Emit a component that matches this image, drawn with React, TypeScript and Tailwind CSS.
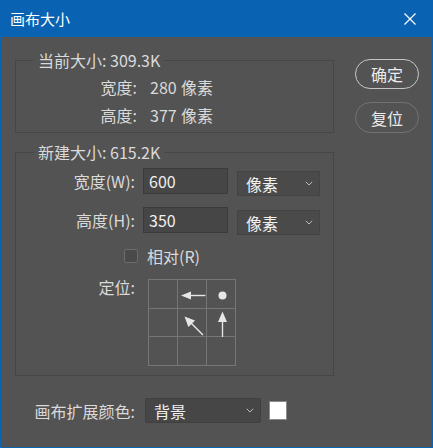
import React from "react";

const font = "font-['Noto_Sans_CJK_SC','Noto_Sans',sans-serif]";

function Chevron() {
  return (
    <svg width="8" height="5" viewBox="0 0 8 5" className="shrink-0">
      <polyline points="0.8,0.8 4,4 7.2,0.8" fill="none" stroke="#bdbdbd" strokeWidth="1" />
    </svg>
  );
}

function Cell({ children }: { children?: React.ReactNode }) {
  return <div className="border-r border-b border-[#767676] relative">{children}</div>;
}

export default function App() {
  return (
    <div className={`w-[433px] h-[448px] flex flex-col ${font} text-[16px] leading-[20px] text-[#dadada]`}>
      <div className="h-[37px] shrink-0 bg-[#0a63b2] flex items-center justify-between pl-[10px] pr-[17px] text-white">
        <span className="text-[15px]">画布大小</span>
        <svg width="12" height="12" viewBox="0 0 12 12">
          <path d="M0.5 0.5 L11.5 11.5 M11.5 0.5 L0.5 11.5" stroke="#ffffff" strokeWidth="1.2" />
        </svg>
      </div>
      <div className="flex-1 bg-[#535353] border-x border-b border-[#0a63b2] flex flex-col">
        <div className="flex pt-[13px] pl-[14px]">
          <div className="flex flex-col w-[319px]">
            <fieldset className="border border-[#464646] w-[319px]">
              <legend className="ml-[18px] px-[4px] leading-[20px]">当前大小: 309.3K</legend>
              <div className="pt-[3px] pb-[3px]">
                <div className="h-[28px] flex items-center">
                  <span className="w-[121px] text-right">宽度:</span>
                  <span className="ml-[13px] w-[31px]">280</span>
                  <span>像素</span>
                </div>
                <div className="h-[28px] flex items-center">
                  <span className="w-[121px] text-right">高度:</span>
                  <span className="ml-[13px] w-[31px]">377</span>
                  <span>像素</span>
                </div>
              </div>
            </fieldset>
            <fieldset className="border border-[#464646] w-[319px] mt-[9px]">
              <legend className="ml-[18px] px-[4px] leading-[20px]">新建大小: 615.2K</legend>
              <div className="pt-[6px] pb-[9px] flex flex-col">
                <div className="h-[28px] flex items-start">
                  <span className="w-[119px] text-right mt-[3px]">宽度(W):</span>
                  <div className="ml-[8px] w-[85px] h-[26px] bg-[#464646] border border-[#3b3b3b] flex items-center pl-[5px] text-[#f0f0f0]">600</div>
                  <div className="ml-[9px] mt-[3px] w-[83px] h-[25px] bg-[#4a4a4a] border border-[#444444] flex items-center justify-between pl-[8px] pr-[6px]">
                    <span className="text-[#f0f0f0]">像素</span>
                    <Chevron />
                  </div>
                </div>
                <div className="h-[28px] mt-[11px] flex items-start">
                  <span className="w-[119px] text-right mt-[3px]">高度(H):</span>
                  <div className="ml-[8px] w-[85px] h-[26px] bg-[#464646] border border-[#3b3b3b] flex items-center pl-[5px] text-[#f0f0f0]">350</div>
                  <div className="ml-[9px] mt-[3px] w-[83px] h-[25px] bg-[#4a4a4a] border border-[#444444] flex items-center justify-between pl-[8px] pr-[6px]">
                    <span className="text-[#f0f0f0]">像素</span>
                    <Chevron />
                  </div>
                </div>
                <div className="h-[20px] mt-[11px] flex items-center">
                  <div className="ml-[108px] w-[14px] h-[14px] bg-[#4a4a4a] border border-[#6c6c6c] rounded-[2px]"></div>
                  <span className="ml-[9px]">相对(R)</span>
                </div>
                <div className="mt-[11px] flex items-start">
                  <span className="w-[119px] text-right">定位:</span>
                  <div className="ml-[13px] mt-[2px] w-[88px] h-[87px] grid grid-cols-3 grid-rows-3 border-l border-t border-[#767676]">
                    <Cell />
                    <Cell>
                      <svg className="absolute inset-0 overflow-visible" width="28" height="28" viewBox="0 0 28 28">
                        <polygon points="3,15.5 13,11.5 13,19.5" fill="#e6e6e6" />
                        <line x1="12" y1="15.5" x2="27.5" y2="15.5" stroke="#e6e6e6" strokeWidth="1.4" />
                      </svg>
                    </Cell>
                    <Cell>
                      <svg className="absolute inset-0" width="28" height="28" viewBox="0 0 28 28">
                        <circle cx="15.5" cy="15.5" r="4" fill="#e6e6e6" />
                      </svg>
                    </Cell>
                    <Cell />
                    <Cell>
                      <svg className="absolute inset-0 overflow-visible" width="28" height="28" viewBox="0 0 28 28">
                        <polygon points="6.5,7.5 17,11.4 10.4,18" fill="#e6e6e6" />
                        <line x1="13" y1="14" x2="25" y2="26" stroke="#e6e6e6" strokeWidth="1.4" />
                      </svg>
                    </Cell>
                    <Cell>
                      <svg className="absolute inset-0 overflow-visible" width="28" height="28" viewBox="0 0 28 28">
                        <polygon points="15.5,2.5 11,13 20,13" fill="#e6e6e6" />
                        <line x1="15.5" y1="12" x2="15.5" y2="28" stroke="#e6e6e6" strokeWidth="1.4" />
                      </svg>
                    </Cell>
                    <Cell />
                    <Cell />
                    <Cell />
                  </div>
                </div>
              </div>
            </fieldset>
          </div>
          <div className="ml-[21px] mt-[9px] flex flex-col">
            <div className="w-[64px] h-[30px] rounded-full border-[1.5px] border-[#c6c6c6] flex items-center justify-center text-[#ececec]">确定</div>
            <div className="w-[64px] h-[31px] mt-[13px] rounded-full border-[1.5px] border-[#727272] flex items-center justify-center text-[#ececec]">复位</div>
          </div>
        </div>
        <div className="mt-[22px] flex items-center pl-[33px]">
          <span className="w-[101px] text-right">画布扩展颜色:</span>
          <div className="ml-[10px] w-[116px] h-[25px] bg-[#464646] border border-[#404040] rounded-[2px] flex items-center justify-between pl-[8px] pr-[6px]">
            <span className="text-[#f0f0f0]">背景</span>
            <Chevron />
          </div>
          <div className="ml-[8px] w-[18px] h-[19px] bg-white border border-[#8a8a8a]"></div>
        </div>
      </div>
    </div>
  );
}
